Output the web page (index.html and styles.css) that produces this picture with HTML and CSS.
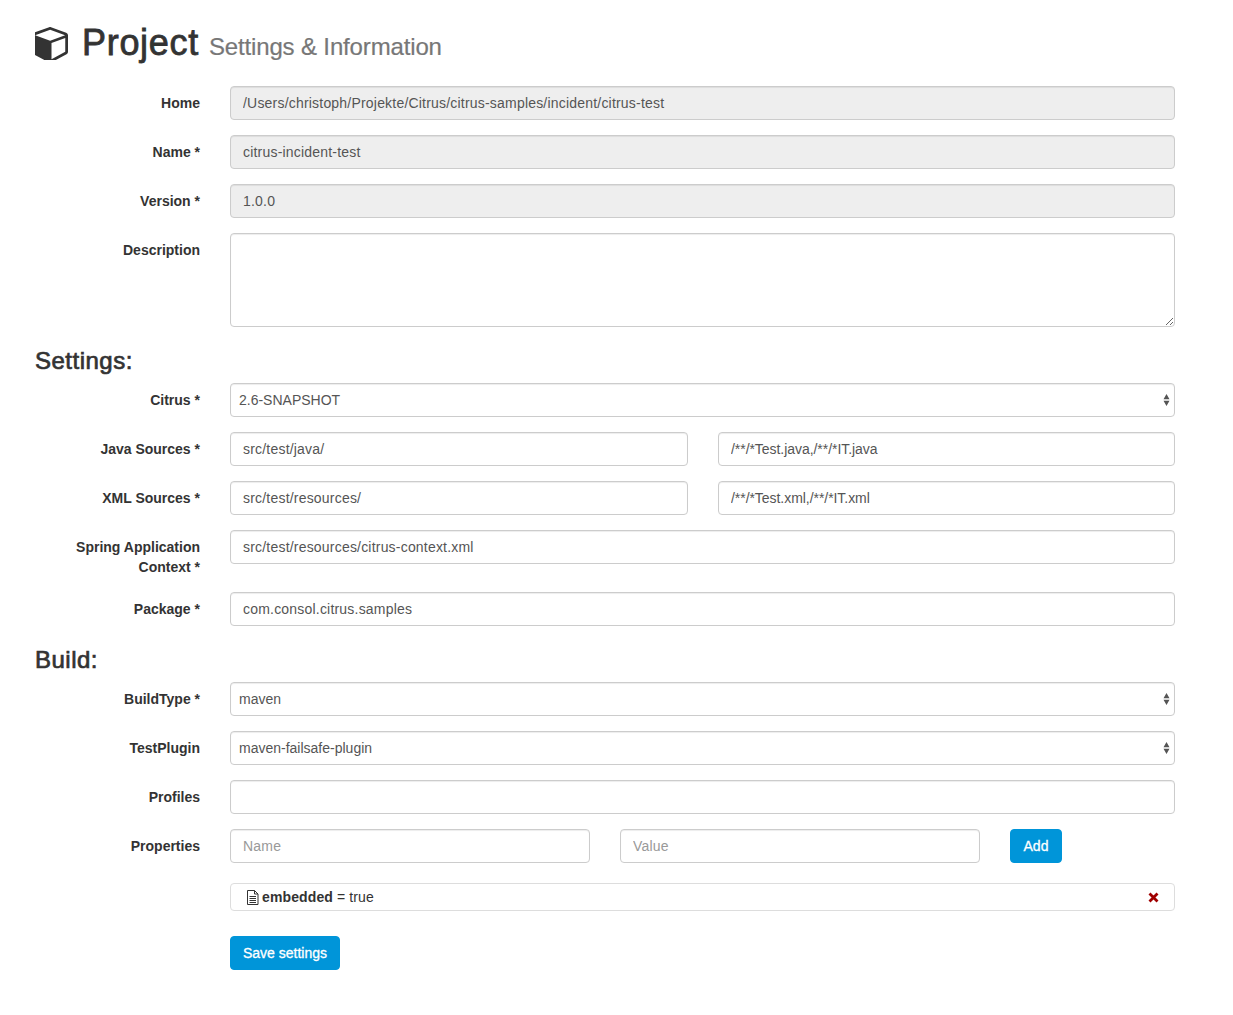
FILE: index.html
```html
<!DOCTYPE html>
<html lang="en">
<head>
  <meta charset="UTF-8">
  <title>Project Settings</title>
  <link rel="stylesheet" href="styles.css">
</head>
<body>
  <h1 class="title">
    <svg class="cube" viewBox="128 128 1536 1536"><path d="M896 1629l640-349v-636l-640 233v752zm-64-865l698-254-698-254-698 254zm832-252v768q0 35-18 65t-50 47l-704 384q-28 16-61 16t-61-16l-704-384q-32-17-50-47t-18-65v-768q0-40 23-73t61-49l704-256q22-8 44-8t44 8l704 256q38 16 61 49t23 73z"/></svg>
    <span class="title-main">Project</span>
    <small>Settings &amp; Information</small>
  </h1>

  <form class="form">
    <div class="row">
      <label>Home</label>
      <input class="field" type="text" value="/Users/christoph/Projekte/Citrus/citrus-samples/incident/citrus-test" disabled>
    </div>
    <div class="row">
      <label>Name *</label>
      <input class="field" type="text" value="citrus-incident-test" disabled>
    </div>
    <div class="row">
      <label>Version *</label>
      <input class="field" type="text" value="1.0.0" disabled>
    </div>
    <div class="row">
      <label>Description</label>
      <textarea class="field area"></textarea>
    </div>

    <h3 class="section">Settings:</h3>
    <div class="row">
      <label>Citrus *</label>
      <div class="select">
        <select class="field"><option>2.6-SNAPSHOT</option></select>
        <svg class="updown" viewBox="0 0 8 14"><path d="M4 0l3.5 6h-7zM4 14L.5 8h7z"/></svg>
      </div>
    </div>
    <div class="row">
      <label>Java Sources *</label>
      <div class="pair">
        <input class="field" type="text" value="src/test/java/">
        <input class="field glob" type="text" value="/**/*Test.java,/**/*IT.java">
      </div>
    </div>
    <div class="row">
      <label>XML Sources *</label>
      <div class="pair">
        <input class="field" type="text" value="src/test/resources/">
        <input class="field glob" type="text" value="/**/*Test.xml,/**/*IT.xml">
      </div>
    </div>
    <div class="row">
      <label>Spring Application Context *</label>
      <input class="field" type="text" value="src/test/resources/citrus-context.xml">
    </div>
    <div class="row">
      <label>Package *</label>
      <input class="field" type="text" value="com.consol.citrus.samples">
    </div>

    <h3 class="section">Build:</h3>
    <div class="row">
      <label>BuildType *</label>
      <div class="select">
        <select class="field"><option>maven</option></select>
        <svg class="updown" viewBox="0 0 8 14"><path d="M4 0l3.5 6h-7zM4 14L.5 8h7z"/></svg>
      </div>
    </div>
    <div class="row">
      <label>TestPlugin</label>
      <div class="select">
        <select class="field"><option>maven-failsafe-plugin</option></select>
        <svg class="updown" viewBox="0 0 8 14"><path d="M4 0l3.5 6h-7zM4 14L.5 8h7z"/></svg>
      </div>
    </div>
    <div class="row">
      <label>Profiles</label>
      <input class="field" type="text">
    </div>
    <div class="row row-tight">
      <label>Properties</label>
      <div class="props">
        <input class="field" type="text" placeholder="Name">
        <input class="field" type="text" placeholder="Value">
        <button class="btn" type="button">Add</button>
      </div>
    </div>
    <div class="row row-item">
      <span></span>
      <div class="prop-item">
        <svg class="file" viewBox="0 0 13 15"><path d="M1.500.5h7l3.500 3.500v10.500h-10.500zM8.500.5v3.500h3.500M3.500 6.500h6.500M3.500 8.500h6.500M3.500 10.500h6.500M3.500 12.500h6.500" fill="none" stroke="#333"/></svg>
        <span class="prop-text"><b>embedded</b> = true</span>
        <svg class="remove" viewBox="0 0 11 11"><path d="M1.500 1.500l8 8M9.500 1.500l-8 8" fill="none" stroke="#a00000" stroke-width="2.800"/></svg>
      </div>
    </div>
    <div class="row">
      <span></span>
      <div><button class="btn" type="button">Save settings</button></div>
    </div>
  </form>
</body>
</html>
```

FILE: styles.css
```css
body {
  margin: 0;
  padding: 0 58px 0 35px;
  background: #fff;
  color: #333;
  font-family: "Liberation Sans", Arial, sans-serif;
  font-size: 14px;
  line-height: 20px;
}
.title {
  display: flex; align-items: baseline;
  margin: 0;
  padding-top: 23px;
  height: 63px;
  font-weight: normal;
  font-size: 36px;
  line-height: 40px;
}
.cube { width: 33px; height: 33px; fill: #333; margin-right: 14px; align-self: flex-start; margin-top: 4px; }
.title-main { -webkit-text-stroke: .8px #333; letter-spacing: .7px; }
.title small { margin-left: 10px; font-size: 24px; color: #777; letter-spacing: -.15px; -webkit-text-stroke: .2px #777; }

/* margin-top collapses with the 15px under the row above */
.section {
  margin: 21px 0 9px;
  font-size: 24px; line-height: 26px;
  font-weight: normal;
  letter-spacing: .5px;
  -webkit-text-stroke: .7px #333;
}
.row {
  display: grid;
  grid-template-columns: 165px 945px;
  column-gap: 30px;
  margin-bottom: 15px;
}
.row-tight { margin-bottom: 20px; }
.row-item { margin-bottom: 25px; }
label {
  padding-top: 7px;
  text-align: right;
  font-weight: bold;
}
.field {
  display: block;
  box-sizing: border-box;
  width: 100%; height: 34px;
  padding: 6px 12px;
  border: 1px solid #ccc; border-radius: 4px;
  background: #fff;
  color: #555;
  font: 14px/20px "Liberation Sans", Arial, sans-serif;
  letter-spacing: .2px;
  box-shadow: inset 0 1px 1px rgba(0,0,0,.075);
}
.field:disabled { background: #eee; opacity: 1; -webkit-text-fill-color: #555; }
.field::placeholder { color: #999; }
.glob { letter-spacing: -.05px; }
.area { height: 94px; resize: vertical; }

.select { position: relative; }
.select select { appearance: none; padding-left: 8px; letter-spacing: 0; }
.updown { position: absolute; right: 5px; top: 11px; width: 7px; height: 12px; fill: #555; }

.pair { display: grid; grid-template-columns: 458px 457px; column-gap: 30px; }
.props { display: grid; grid-template-columns: 360px 360px 52px; column-gap: 30px; }

.btn {
  height: 34px;
  padding: 6px 12px;
  border: 1px solid #0095d9; border-radius: 4px;
  background: #0095d9; color: #fff;
  font: 14px/20px "Liberation Sans", Arial, sans-serif;
  -webkit-text-stroke: .3px #fff;
  cursor: pointer;
}
.prop-item {
  display: flex; align-items: center;
  box-sizing: border-box;
  height: 28px;
  padding: 0 15px;
  border: 1px solid #ddd; border-radius: 4px;
}
.prop-text { letter-spacing: .12px; }
.file { width: 13px; height: 15px; margin-right: 3px; }
.remove { width: 11px; height: 11px; margin-left: auto; }
```
